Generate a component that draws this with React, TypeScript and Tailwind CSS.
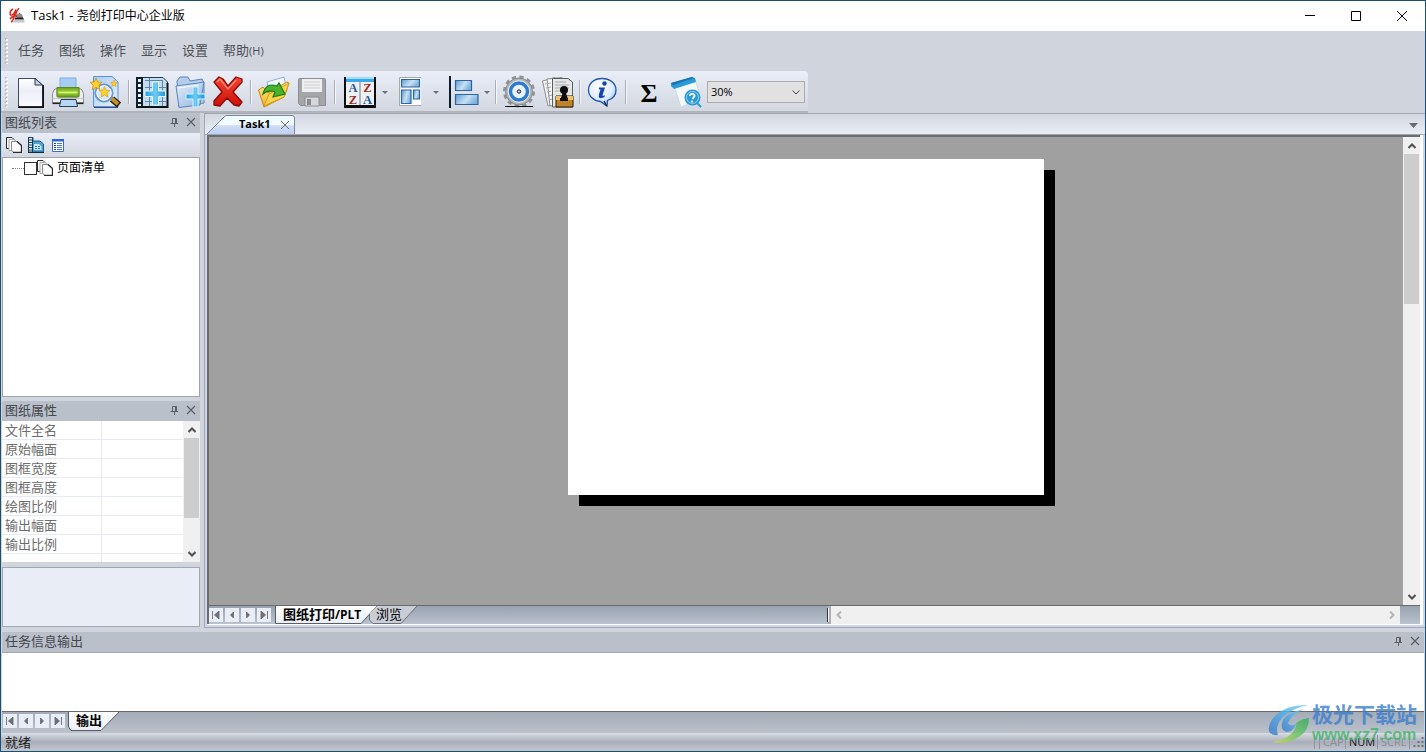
import React from "react";

type Kids = { children?: React.ReactNode };

function Defs() {
  return (
    <svg className="absolute size-0" aria-hidden="true">
      <defs>
        <linearGradient id="paper" x1="0" y1="0" x2="0" y2="1">
          <stop offset="0" stopColor="#ffffff" />
          <stop offset="0.45" stopColor="#eceef8" />
          <stop offset="1" stopColor="#fbfbff" />
        </linearGradient>
        <linearGradient id="sky" x1="0" y1="0" x2="1" y2="1">
          <stop offset="0" stopColor="#a9cdf2" />
          <stop offset="1" stopColor="#e6f2fd" />
        </linearGradient>
        <linearGradient id="steel" x1="0" y1="0" x2="1" y2="0.4">
          <stop offset="0" stopColor="#5c9bd0" />
          <stop offset="0.6" stopColor="#c7e0f3" />
          <stop offset="1" stopColor="#7db4de" />
        </linearGradient>
        <linearGradient id="green" x1="0" y1="0" x2="0" y2="1">
          <stop offset="0" stopColor="#6b9c1f" />
          <stop offset="0.5" stopColor="#a8d836" />
          <stop offset="1" stopColor="#5c9a1c" />
        </linearGradient>
        <linearGradient id="plus" x1="0" y1="0" x2="1" y2="0">
          <stop offset="0" stopColor="#1f9fe4" />
          <stop offset="0.5" stopColor="#6dcbf6" />
          <stop offset="1" stopColor="#1a93dc" />
        </linearGradient>
        <linearGradient id="folder" x1="0" y1="0" x2="1" y2="1">
          <stop offset="0" stopColor="#e3eefa" />
          <stop offset="1" stopColor="#8fb4e0" />
        </linearGradient>
        <linearGradient id="red" x1="0" y1="0" x2="0" y2="1">
          <stop offset="0" stopColor="#f4452f" />
          <stop offset="1" stopColor="#c8120c" />
        </linearGradient>
        <linearGradient id="gold" x1="0" y1="0" x2="0" y2="1">
          <stop offset="0" stopColor="#fff0a0" />
          <stop offset="1" stopColor="#f3ae1c" />
        </linearGradient>
        <radialGradient id="bubble" cx="0.4" cy="0.3" r="0.8">
          <stop offset="0" stopColor="#ffffff" />
          <stop offset="0.6" stopColor="#dcecff" />
          <stop offset="1" stopColor="#7fb2f2" />
        </radialGradient>
        <linearGradient id="tab" x1="0" y1="0" x2="0" y2="1">
          <stop offset="0" stopColor="#ecfbff" />
          <stop offset="0.5" stopColor="#f3fcff" />
          <stop offset="0.55" stopColor="#cfdcf8" />
          <stop offset="1" stopColor="#bfd0f3" />
        </linearGradient>
        <linearGradient id="sheet" x1="0" y1="0" x2="0" y2="1">
          <stop offset="0" stopColor="#ffffff" />
          <stop offset="1" stopColor="#e9edf3" />
        </linearGradient>
        <linearGradient id="swirl" x1="0" y1="1" x2="1" y2="0">
          <stop offset="0" stopColor="#3a78c8" />
          <stop offset="0.6" stopColor="#4fb4ee" />
          <stop offset="1" stopColor="#7fcdf2" />
        </linearGradient>
        <linearGradient id="leaf" x1="0" y1="1" x2="1" y2="0">
          <stop offset="0" stopColor="#d2dd45" />
          <stop offset="0.5" stopColor="#6cc45f" />
          <stop offset="1" stopColor="#2fa95e" />
        </linearGradient>
      </defs>
    </svg>
  );
}

function Art({ children }: Kids) {
  return (
    <svg viewBox="0 0 38 38" className="size-[38px]" aria-hidden="true">
      {children}
    </svg>
  );
}

const NewIcon = () => (
  <Art>
    <path d="M7.5 5.5H24L31.5 12V33.5H7.5Z" fill="url(#paper)" stroke="#3b4a66" />
    <path d="M7 34.2H32.2V12" fill="none" stroke="#111" strokeWidth="1.6" />
    <path d="M24 5.5V12H31.5Z" fill="#c5d4ee" stroke="#24324c" />
  </Art>
);
const PrintIcon = () => (
  <Art>
    <path d="M11 5H27V17H11Z" fill="#a6cdf3" stroke="#7fb0e4" />
    <path d="M3.5 21Q4 16 8 15V24H30V15Q34 16 34.5 21V30H3.5Z" fill="#eceef0" stroke="#8d9296" />
    <path d="M8 14.5H30V22Q30 24 28 24H10Q8 24 8 22Z" fill="url(#green)" stroke="#5a8b1a" />
    <path d="M10 19.5H28" stroke="#d8f27a" strokeWidth="1.6" />
    <path d="M3.5 25.5H34.5" stroke="#c3c7ca" />
    <path d="M3.5 30.3H34.5" stroke="#222" strokeWidth="1.6" />
    <path d="M12 26.5H27L28.5 33.5H10.5Z" fill="#b7d7f7" stroke="#2d3d55" />
  </Art>
);
const STAR = "M0 -6L1.7 -2 6 -1.7 2.8 1.2 3.8 5.6 0 3.2 -3.8 5.6 -2.8 1.2 -6 -1.7 -1.7 -2Z";
const PreviewIcon = () => (
  <Art>
    <path d="M6.5 3.5H25L31 9V34H6.5Z" fill="url(#sky)" stroke="#5d93d8" />
    <path d="M7 34.3H31" stroke="#274f93" strokeWidth="1.4" />
    <path d="M25 26L32 32" stroke="#2a210f" strokeWidth="6.5" />
    <path d="M23.5 24.5L31 31" stroke="#c4922b" strokeWidth="4" />
    <circle cx="17" cy="20" r="8.5" fill="#cfe7ff" stroke="#6d95c8" strokeWidth="2" />
    <circle cx="17" cy="20" r="7.2" fill="none" stroke="#fff" />
    <path d={STAR} transform="translate(9 11)" fill="#ffd428" stroke="#d88e0c" strokeWidth="0.8" />
    <path d={STAR} transform="translate(17.5 19) scale(.9)" fill="#ffd428" stroke="#e39a14" strokeWidth="0.8" />
    <path d={STAR} transform="translate(27 10.5) scale(.55)" fill="#ffd428" stroke="#d88e0c" />
  </Art>
);
const FilmAddIcon = () => (
  <Art>
    <path d="M3.5 4.5H30L34.5 9V34H3.5Z" fill="#c3dcf0" stroke="#1f3850" />
    <path d="M3 4H10V34H3Z" fill="#12202e" />
    <path d="M5 6H8V9H5ZM5 11H8V14H5ZM5 16H8V19H5ZM5 21H8V24H5ZM5 26H8V29H5ZM5 31H8V33H5Z" fill="#e6f4ff" />
    <path d="M12 7.500H30M12 14.500H33M12 28.500H33M16.500 5V33M29.500 8V33" stroke="#5d86a6" />
    <path d="M3 34H34.500V10" fill="none" stroke="#0c1116" strokeWidth="2" />
    <path d="M19.500 9H25.500V18H32.500V23.500H25.500V32H19.500V23.500H12V18H19.500Z" fill="url(#plus)" stroke="#e2f7ff" />
  </Art>
);
const FolderAddIcon = () => (
  <Art>
    <path d="M6 8L9 4H17L19 8L31 6L33 10V30L8 34Z" fill="#b5cdea" stroke="#5b86ba" />
    <path d="M5 13L27 10 33 9 29 32 8 34.5Z" fill="url(#folder)" stroke="#5b86ba" />
    <path d="M7 15L28 12" stroke="#fff" />
    <path d="M22 14H27V21H34V26H27V34H22V26H15V21H22Z" fill="url(#plus)" stroke="#d9f3ff" />
  </Art>
);
const DeleteIcon = () => (
  <Art>
    <path d="M5 9L10 4 14 6 19 13 27 4 33 6 33 9 24 19 33 29 30 33 25 32 18 25 11 33 5 32 5 28 13 19Z" fill="url(#red)" stroke="#8d0905" strokeWidth="1.3" strokeLinejoin="round" />
    <path d="M8 9L11 6 19 16 27 7" fill="none" stroke="#ff8b76" strokeWidth="1.3" />
  </Art>
);
const OpenIcon = () => (
  <Art>
    <path d="M12 9L29 4 32 18 15 24Z" fill="#f2f8ff" stroke="#8fb0dc" />
    <path d="M3.5 17L8 14 13 20 32 9 34 10 29 24 9 34Z" fill="url(#gold)" stroke="#c88511" />
    <path d="M9 33L14 21 34 10 29 24Z" fill="#fbd34c" stroke="#d99a1a" />
    <path d="M8 21Q11 9 22 13L24 10 30 21 18 24 20 19Q14 16 8 21Z" fill="#49b32c" stroke="#227a13" strokeWidth="1.2" />
  </Art>
);
const SaveIcon = () => (
  <Art>
    <path d="M5.5 6.5Q5.5 5.5 6.5 5.5H31.5Q32.5 5.5 32.5 6.5V32.5H7.5L5.5 30.5Z" fill="#a5a6aa" stroke="#8d8e92" />
    <path d="M9 6H29V19H9Z" fill="#efeff0" />
    <path d="M11 9H27M11 12H27M11 15H27" stroke="#cfcfd2" />
    <path d="M12 24H26V33H12Z" fill="#d7d7da" stroke="#8d8e92" />
    <path d="M14 26H18V32H14Z" fill="#8b8c90" />
  </Art>
);
const SortIcon = () => (
  <Art>
    <path d="M3 4H35V35H3Z" fill="#0c0c0c" />
    <path d="M5 4H33V9H5Z" fill="#3ba8ea" />
    <path d="M5 4H33V6H5Z" fill="#9ee0fb" />
    <path d="M5 9H33V32H5Z" fill="#eef1f4" />
    <path d="M19 9V32" stroke="#777b80" />
    <g fontFamily="Liberation Serif, serif" fontWeight="700" fontSize="12.5" textAnchor="middle">
      <text x="12" y="19" fill="#265a9c">A</text>
      <text x="26.5" y="19" fill="#a02a22">Z</text>
      <text x="12" y="31" fill="#a02a22">Z</text>
      <text x="26.5" y="31" fill="#265a9c">A</text>
    </g>
  </Art>
);
const LayoutIcon = () => (
  <Art>
    <path d="M7 4H29V32H7Z" fill="#fbfcfd" />
    <path d="M7.5 32V4.5H29" fill="none" stroke="#a6a8aa" />
    <path d="M7 32.5H29" stroke="#a6a8aa" />
    <g fill="url(#steel)" stroke="#2f659f" strokeWidth="1.2">
      <path d="M9.5 6.5H27.5V14H9.5Z" />
      <path d="M9.5 17H19V30.5H9.5Z" />
      <path d="M21.5 17H27.5V26H21.5Z" />
    </g>
  </Art>
);
const AlignIcon = () => (
  <Art>
    <path d="M6 3H8V35H6Z" fill="#0c1a2c" />
    <g fill="url(#steel)" stroke="#2f659f" strokeWidth="1.2">
      <path d="M12.5 7.5H28.5V17.5H12.5Z" />
      <path d="M12.5 21.5H35V31.5H12.5Z" />
    </g>
  </Art>
);
const GearIcon = () => (
  <Art>
    <circle cx="19" cy="18.5" r="14.5" fill="none" stroke="#8f9296" strokeWidth="3" strokeDasharray="4.2 3.39" />
    <circle cx="19" cy="18.5" r="13.5" fill="#b3b6b9" stroke="#85888c" />
    <circle cx="19" cy="18.5" r="8.5" fill="#eaf3fb" stroke="#2b7bd0" strokeWidth="3.4" />
    <circle cx="19" cy="18.5" r="10.8" fill="none" stroke="#e8eaec" />
    <circle cx="19" cy="18.5" r="1.7" fill="#c9cdd1" stroke="#20262c" />
    <path d="M5 33.5H33" stroke="#0c0c0c" />
  </Art>
);
const DocsIcon = () => (
  <Art>
    <path d="M4.5 8L17 4.5 20 30 10 33Z" fill="#f1f2f2" stroke="#8b8e91" />
    <path d="M9 6L24 4.5V31L12 33Z" fill="#f7f7f7" stroke="#8b8e91" />
    <path d="M14.500 5.500H30L34.500 9V34H14.500Z" fill="#e5e6e6" stroke="#5b5e61" />
    <path d="M17 9H28M17 12H31M17 15H31M17 18H25M7 11L13 10M8 15L13 14M9 19L13 18M10 23L14 22M11 27L14 26" stroke="#a5a8aa" />
    <path d="M18 23H35V34H18Z" fill="#c08327" stroke="#2a1a08" />
    <path d="M18 23H35V27H18Z" fill="#eec26a" />
    <circle cx="26" cy="17" r="4" fill="#0d0d0d" />
    <path d="M25 19H27.500L30 26H22.500ZM22 25H30V28H22Z" fill="#0d0d0d" />
  </Art>
);
const InfoIcon = () => (
  <Art>
    <path d="M18 5.500C26 5.500 32 10.500 32 17C32 22.500 28.500 26 23.500 27.500L23 33 16.500 28.500C9.500 28 4.500 23 4.500 17C4.500 10.500 10 5.500 18 5.500Z" fill="url(#bubble)" stroke="#2453a8" strokeWidth="1.3" />
    <path d="M20 28L22.800 33" stroke="#111c38" strokeWidth="1.300" />
    <circle cx="20.500" cy="10.500" r="2.200" fill="#1745b0" />
    <path d="M15 14.500H21L18.500 22.500Q18.500 23.500 21 22L20.500 24Q17 26 15 24.500Q14 23.500 16.500 16.500L14.800 16.200Z" fill="#1745b0" />
  </Art>
);
const SearchPageIcon = () => (
  <Art>
    <path d="M6 13L27 6 33 26 13 34Z" fill="#f4f8fb" stroke="#d0dae3" />
    <path d="M3 10L24 4 27 5 28 9 6 16 3 13Z" fill="#2a9bd8" />
    <path d="M3 10L24 4 26 5 5 12Z" fill="#1873ad" />
    <circle cx="24.500" cy="24.500" r="8" fill="#2a9bd8" />
    <circle cx="24.500" cy="24.500" r="6" fill="none" stroke="#8fd0f0" />
    <path d="M22 23Q22 20.500 25 21Q28 22.500 25.500 24.500L24.500 26" fill="none" stroke="#fff" strokeWidth="1.800" />
    <circle cx="24" cy="28.500" r="1.100" fill="#fff" />
    <path d="M29 30L33 34" stroke="#2a9bd8" strokeWidth="2" />
  </Art>
);

function Tool({ label, children }: Kids & { label: string }) {
  return (
    <button type="button" aria-label={label} className="flex size-[38px] shrink-0 items-center justify-center">
      {children}
    </button>
  );
}
function SplitTool({ label, children }: Kids & { label: string }) {
  return (
    <div className="ml-0.5 flex shrink-0 items-center">
      <Tool label={label}>{children}</Tool>
      <button type="button" aria-label={label + "选项"} className="flex h-[38px] w-[11px] items-center justify-center">
        <svg viewBox="0 0 6 3" className="h-[3px] w-1.5"><path d="M0 0H6L3 3Z" fill="#6f6f73" /></svg>
      </button>
    </div>
  );
}
const Sep = () => (
  <div className="flex w-2 shrink-0 justify-center">
    <div className="h-6 w-0.5 border-l border-[#a9aeb8] bg-[#f6f8fc]" />
  </div>
);
const Grip = ({ className }: { className: string }) => (
  <svg className={className} aria-hidden="true">
    <path d="M1 0V40" stroke="#b4b8c1" strokeWidth="2" strokeDasharray="2 2" />
    <path d="M2 1V40" stroke="#fff" strokeWidth="2" strokeDasharray="2 2" />
  </svg>
);

function PinClose() {
  return (
    <div className="flex items-center gap-[7px] text-[#5c6066]">
      <button type="button" aria-label="固定" className="flex size-2.5 items-center justify-center">
        <svg viewBox="0 0 10 10" className="size-2.5" fill="none" stroke="currentColor">
          <path d="M3.500 6.500V1.500H7.500V6.500M6.500 1.500V6.500M1.500 6.500H9M5.500 6.500V10" />
        </svg>
      </button>
      <button type="button" aria-label="关闭" className="flex size-2.5 items-center justify-center">
        <svg viewBox="0 0 10 10" className="size-2.5" fill="none" stroke="currentColor" strokeWidth="1.200">
          <path d="M1 1L9 9M9 1L1 9" />
        </svg>
      </button>
    </div>
  );
}
function PanelHead({ title }: { title: string }) {
  return (
    <header className="flex h-5 shrink-0 items-center justify-between bg-[#bac0ca] pr-1 pb-0.5 pl-[3px] text-[13px] leading-[18px] text-[#44474c]">
      <h2>{title}</h2>
      <PinClose />
    </header>
  );
}

const NAV: [string, string][] = [
  ["首页", "M3.500 3V11M10 3V11L5.500 7Z"],
  ["上一页", "M8.500 4V10L5.500 7Z"],
  ["下一页", "M5.500 4V10L8.500 7Z"],
  ["末页", "M4 3V11L8.500 7ZM10.500 3V11"],
];
function SheetNav() {
  return (
    <div className="flex shrink-0 gap-0.5">
      {NAV.map(([label, d]) => (
        <button key={label} type="button" aria-label={label} className="size-3.5 bg-[#e9edf6]">
          <svg viewBox="0 0 14 14" className="size-3.5">
            <path d={d} fill="#6c6f75" stroke="#6c6f75" strokeWidth="0.900" />
          </svg>
        </button>
      ))}
    </div>
  );
}

const Chevron = ({ d, light }: { d: string; light?: boolean }) => (
  <svg viewBox="0 0 8 8" className="size-2" fill="none" stroke={light ? "#b5b5b5" : "#505050"} strokeWidth="2">
    <path d={d} />
  </svg>
);
const UP = "M0.500 6L4 2.500 7.500 6";
const DOWN = "M0.500 2L4 5.500 7.500 2";

function VScroll({ thumb }: { thumb: string }) {
  return (
    <div className="flex w-[17px] shrink-0 flex-col bg-[#f0f0f0]">
      <button type="button" aria-label="向上滚动" className="flex h-[17px] shrink-0 items-center justify-center"><Chevron d={UP} /></button>
      <div className="flex min-h-0 flex-1 flex-col px-px"><div className={thumb} /></div>
      <button type="button" aria-label="向下滚动" className="flex h-[17px] shrink-0 items-center justify-center"><Chevron d={DOWN} /></button>
    </div>
  );
}

const PagesIcon = () => (
  <svg viewBox="0 0 16 16" className="size-4" fill="#fdfdfd" stroke="#2b2b2b">
    <path d="M0.500 0.500H6L8.500 3V11.500H0.500Z" />
    <path d="M3 2.500H8L11.500 5V13.500H3Z" stroke="#a8a8a8" />
    <path d="M5.500 4.500H11L15.500 8.500V15.500H7.500L5.500 13Z" stroke="#8a8a8a" />
    <path d="M11 4.500L15.500 8.500V15.500H7" fill="none" strokeWidth="1.300" />
  </svg>
);
const SheetIcon = () => (
  <svg viewBox="0 0 16 16" className="size-4">
    <path d="M0.500 0.500H5V4H12L15.500 7V15H0.500Z" fill="#4aa3d4" stroke="#1d5c86" />
    <path d="M0.500 0.500H4.500V15H0.500Z" fill="#e6f1f8" stroke="#1a3a52" />
    <path d="M1 3H4M1 5.500H4M1 8H4M1 10.500H4M1 13H4" stroke="#1a3a52" />
    <path d="M6 7H11L13.500 9.500V13H6Z" fill="#c8e6f6" />
    <path d="M7 9.500H12M7 11.500H12" stroke="#2478ab" strokeDasharray="2 1" />
    <path d="M0 15.500H16" stroke="#102c40" />
  </svg>
);
const ListIcon = () => (
  <svg viewBox="0 0 12 13" className="h-[13px] w-3">
    <path d="M0.500 0.500H11.500V12.500H0.500Z" fill="#fff" stroke="#3a6bd0" />
    <path d="M0 0H12V2.500H0Z" fill="#2f66d4" />
    <path d="M5 4.500H10M5 6.500H10M5 8.500H10M5 10.500H10" stroke="#4b7bd8" />
    <path d="M2 4.500H4M2 6.500H4M2 8.500H4M2 10.500H4" stroke="#1b3f94" />
  </svg>
);

const MENUS = ["任务", "图纸", "操作", "显示", "设置"];
const PROPS = ["文件全名", "原始幅面", "图框宽度", "图框高度", "绘图比例", "输出幅面", "输出比例"];

function TitleBar() {
  return (
    <header className="flex h-[30px] shrink-0 items-center bg-white pl-2 text-xs text-black">
      <svg viewBox="0 0 16 16" className="size-4">
        <path d="M4 1Q0 3 1.500 7Q4 8 7 1.500Q5 6 5 9Q4 13 2 14M10 0Q6 5 7 8Q9 9 11 5M1 11Q4 7 9 8" fill="none" stroke="#e0241c" strokeWidth="1.400" />
        <path d="M8 6L13 6 14 10H8Z" fill="#8d8d8d" />
        <path d="M6 9.500H14L15 11.500H5.500Z" fill="#222" />
        <path d="M4 12H15.500V14.500H4Z" fill="#c4c7cb" />
      </svg>
      <h1 className="ml-1.5 flex flex-1 items-center whitespace-pre">
        <span className="text-[13px]">{"Task1 - "}</span>尧创打印中心企业版
      </h1>
      <div className="flex">
        <button type="button" aria-label="最小化" className="flex w-[46px] justify-center">
          <svg viewBox="0 0 10 10" className="size-2.5" stroke="#000"><path d="M0 4.500H10" /></svg>
        </button>
        <button type="button" aria-label="最大化" className="flex w-[46px] justify-center">
          <svg viewBox="0 0 10 10" className="size-2.5" fill="none" stroke="#000"><path d="M0.500 0.500H9.500V9.500H0.500Z" /></svg>
        </button>
        <button type="button" aria-label="关闭窗口" className="flex w-[46px] justify-center">
          <svg viewBox="0 0 10 10" className="size-2.5" stroke="#000"><path d="M0 0L10 10M10 0L0 10" /></svg>
        </button>
      </div>
    </header>
  );
}

function ToolBar() {
  return (
    <div className="flex h-[42px] shrink-0">
      <div className="flex items-center rounded-tr border-b-2 border-[#b0b4bd] bg-linear-to-b from-[#eaeef8] to-[#d3d7e0] pt-0.5 pr-[3px] pl-1">
        <Grip className="mr-0.5 h-[30px] w-1" />
        <Tool label="新建"><NewIcon /></Tool>
        <Tool label="打印"><PrintIcon /></Tool>
        <Tool label="预览"><PreviewIcon /></Tool>
        <Sep />
        <Tool label="添加图纸"><FilmAddIcon /></Tool>
        <Tool label="添加文件夹"><FolderAddIcon /></Tool>
        <Tool label="删除"><DeleteIcon /></Tool>
        <Sep />
        <Tool label="打开"><OpenIcon /></Tool>
        <Tool label="保存"><SaveIcon /></Tool>
        <Sep />
        <SplitTool label="排序"><SortIcon /></SplitTool>
        <SplitTool label="排版"><LayoutIcon /></SplitTool>
        <SplitTool label="对齐"><AlignIcon /></SplitTool>
        <Sep />
        <Tool label="设置"><GearIcon /></Tool>
        <Tool label="图章"><DocsIcon /></Tool>
        <Sep />
        <Tool label="信息"><InfoIcon /></Tool>
        <Sep />
        <Tool label="统计"><span className="pt-1 font-['Liberation_Serif',serif] text-[26px] leading-none font-bold text-black">Σ</span></Tool>
        <Tool label="查询"><SearchPageIcon /></Tool>
        <div className="relative ml-px">
          <select aria-label="缩放" defaultValue="30%" className="block h-[22px] w-[98px] appearance-none border border-[#adadad] bg-[#e1e1e1] pl-[3px] text-[11px] text-black">
            <option>30%</option>
          </select>
          <svg viewBox="0 0 8 5" className="pointer-events-none absolute top-[9px] right-[5px] h-[5px] w-2" fill="none" stroke="#444">
            <path d="M0.500 0.500L4 4 7.500 0.500" />
          </svg>
        </div>
      </div>
    </div>
  );
}

function Sidebar() {
  return (
    <aside className="flex w-[198px] shrink-0 flex-col pb-px">
      <PanelHead title="图纸列表" />
      <div className="flex h-6 shrink-0 items-center gap-1.5 bg-linear-to-b from-[#e9edf7] to-[#d3d7e0] pl-1">
        <button type="button" aria-label="页面"><PagesIcon /></button>
        <button type="button" aria-label="图纸"><SheetIcon /></button>
        <button type="button" aria-label="列表" className="ml-0.5"><ListIcon /></button>
      </div>
      <div className="min-h-0 flex-1 border border-[#9fa3ab] bg-white pl-[9px]">
        <label className="flex h-5 items-center text-xs text-black">
          <span className="w-3 border-t border-dotted border-[#808080]" />
          <input type="checkbox" className="size-[13px] appearance-none border border-[#333] bg-white" />
          <PagesIcon />
          <span className="ml-1">页面清单</span>
        </label>
      </div>
      <div className="mt-1 flex h-[161px] shrink-0 flex-col">
        <PanelHead title="图纸属性" />
        <div className="flex h-[141px] overflow-hidden bg-white">
          <table className="h-fit flex-1 table-fixed border-separate border-spacing-0 text-[13px] leading-[18px] text-[#6d6d6d]">
            <tbody>
              {PROPS.map((name) => (
                <tr key={name}>
                  <th scope="row" className="w-[100px] border-r border-b border-[#e6eaf4] p-0 pl-[3px] text-left font-normal">{name}</th>
                  <td className="border-b border-[#e6eaf4] p-0" />
                </tr>
              ))}
              <tr className="h-[18px]"><th className="border-r border-[#e6eaf4] p-0" /><td className="p-0" /></tr>
            </tbody>
          </table>
          <VScroll thumb="h-20 bg-[#cdcdcd]" />
        </div>
      </div>
      <div className="mt-[5px] h-[60px] shrink-0 border border-[#a3a7b0] bg-[#e9edf6]" />
    </aside>
  );
}

function Workspace() {
  return (
    <main className="ml-1 flex min-w-0 flex-1 flex-col border-b border-l border-[#a2a7b2]">
      <div className="flex h-[22px] shrink-0 items-end justify-between border-t border-b border-[#a2a7b2] bg-linear-to-b from-[#d3d7e0] to-[#e9edf6] pr-[7px] pl-0.5">
        <button type="button" className="relative flex h-[19px] w-[88px] items-center text-[11px] font-bold text-black">
          <svg viewBox="0 0 88 19" className="absolute inset-0 h-[19px] w-[88px]">
            <path d="M0 19L17 2Q18.500 0.500 20 0.500H85Q87.500 0.500 87.500 3V19" fill="url(#tab)" stroke="#7d8794" />
          </svg>
          <span className="relative ml-8">Task1</span>
          <svg viewBox="0 0 8 8" className="relative ml-2.5 size-2" stroke="#6b6b6b"><path d="M0 0L8 8M8 0L0 8" /></svg>
        </button>
        <button type="button" aria-label="标签列表" className="mb-1.5">
          <svg viewBox="0 0 9 5" className="h-[5px] w-[9px]"><path d="M0 0H9L4.500 5Z" fill="#6a6a6a" /></svg>
        </button>
      </div>
      <div className="flex min-h-0 flex-1 flex-col border-x-2 border-b-2 border-[#cbd6ee] bg-white pr-[3px] pb-px">
        <div className="flex min-h-0 flex-1 flex-col border-t-2 border-l-2 border-[#6d6d6d]">
          <div className="flex min-h-0 flex-1">
            <div className="flex flex-1 justify-center bg-[#a0a0a0] pt-[22px]">
              <div className="h-[336px] w-[476px] bg-white shadow-[11px_11px_0_#000]" />
            </div>
            <VScroll thumb="h-[150px] bg-[#cdcdcd]" />
          </div>
          <div className="flex h-[19px] shrink-0 border-t border-[#696969] bg-linear-to-b from-[#98a3b0] to-[#b9c2cd]">
            <div className="flex w-[51%] items-center">
              <SheetNav />
              <button type="button" className="relative ml-1 flex h-[18px] w-[102px] items-center pl-2 text-[13px] font-bold text-black">
                <svg viewBox="0 0 102 18" className="absolute inset-0 h-[18px] w-[102px]">
                  <path d="M0.500 0V17.500H86L102 0Z" fill="url(#sheet)" />
                  <path d="M0.500 0V17.500H86L102 0" fill="none" stroke="#5a5f66" />
                </svg>
                <span className="relative whitespace-nowrap">图纸打印<span className="text-xs">/PLT</span></span>
              </button>
              <button type="button" className="relative -ml-2 flex h-[18px] w-12 items-center pl-[7px] text-[13px] text-black">
                <svg viewBox="0 0 48 18" className="absolute inset-0 h-[18px] w-12">
                  <path d="M8 0L0.500 8V14L4 17.500H32L48 0Z" fill="#c9ced6" />
                  <path d="M0.500 8V14L4 17.500H32L48 0" fill="none" stroke="#6b7078" />
                </svg>
                <span className="relative">浏览</span>
              </button>
            </div>
            <div className="flex w-1 items-center bg-[#a9afbc]"><div className="h-3.5 w-0.5 border-l border-[#333] bg-white" /></div>
            <div className="flex flex-1 items-center justify-between bg-[#f0f0f0] px-1">
              <button type="button" aria-label="向左滚动"><Chevron light d="M6 0.500L2.500 4 6 7.500" /></button>
              <button type="button" aria-label="向右滚动"><Chevron light d="M2 0.500L5.500 4 2 7.500" /></button>
            </div>
            <div className="w-5" />
          </div>
        </div>
      </div>
    </main>
  );
}

function OutputPanel() {
  return (
    <section className="mt-1 shrink-0 px-px">
      <PanelHead title="任务信息输出" />
      <div className="h-[59px] border-t border-[#a3a7b0] bg-white" />
      <div className="flex h-[22px] items-start border-t border-[#696969] bg-linear-to-b from-[#a3acb8] to-[#bbc2cc] pl-px">
        <div className="pt-0.5"><SheetNav /></div>
        <button type="button" className="relative ml-[3px] flex h-[19px] w-[52px] items-center pb-0.5 pl-2 text-[13px] font-bold text-black">
          <svg viewBox="0 0 52 19" className="absolute inset-0 h-[19px] w-[52px]">
            <path d="M0.500 0V15L3 18.500H33L51 0Z" fill="url(#sheet)" />
            <path d="M0.500 0V15L3 18.500H33L51 0" fill="none" stroke="#5a5f66" />
          </svg>
          <span className="relative">输出</span>
        </button>
      </div>
    </section>
  );
}

function StatusBar() {
  return (
    <footer className="flex h-[18px] shrink-0 items-center justify-between bg-linear-to-b from-[#d9dce3] via-[#a9aebb] to-[#c3c7cf] pl-1 text-[13px] leading-[18px] text-[#1c1c1c]">
      <span>就绪</span>
      <div className="flex h-full items-center text-[11px] text-[#8b8f97]">
        <span className="mr-1 h-3.5 border-l border-[#8e939d]" />
        <span className="flex h-3.5 w-[26px] items-center border-l border-[#8e939d] pl-[3px]">CAP</span>
        <span className="flex h-3.5 w-8 items-center border-l border-[#8e939d] pl-[3px] text-[#111]">NUM</span>
        <span className="flex h-3.5 w-8 items-center border-l border-[#8e939d] pl-[3px]">SCRL</span>
        <svg viewBox="0 0 14 14" className="h-3.5 w-4 border-l border-[#8e939d]" fill="#6e737c">
          <path d="M11 2H13V4H11ZM11 6H13V8H11ZM11 10H13V12H11ZM7 6H9V8H7ZM7 10H9V12H7ZM3 10H5V12H3Z" />
        </svg>
      </div>
    </footer>
  );
}

function Watermark() {
  return (
    <div className="pointer-events-none absolute right-2 bottom-1.5 flex items-center gap-0.5 opacity-80">
      <svg viewBox="0 0 42 40" className="h-10 w-[42px]">
        <path d="M40 1Q20 0 8 11Q-1 20 1 27Q3 32 10 31Q7 22 14 14Q22 5 40 1Z" fill="url(#swirl)" />
        <path d="M36 5Q20 8 15 16Q11 26 19 28Q26 27 28 20Q22 23 20 19Q23 11 36 5Z" fill="url(#swirl)" />
        <path d="M41 14Q41 26 32 32Q20 41 4 38Q17 36 23 30Q29 24 28 19Q33 15 41 14Z" fill="url(#leaf)" />
      </svg>
      <div className="flex flex-col">
        <span className="text-[21px] leading-[22px] font-bold text-[#3c7fce]">极光下载站</span>
        <span className="font-['Liberation_Sans',sans-serif] text-[16px] leading-5 font-bold text-[#45b56c]">www.xz7.com</span>
      </div>
    </div>
  );
}

export default function App() {
  return (
    <div className="relative flex h-screen min-h-[600px] flex-col overflow-hidden border border-[#1d4f70] bg-[#d0d4dd] font-['Open_Sans','Noto_Sans_CJK_SC',sans-serif]">
      <Defs />
      <TitleBar />
      <nav className="flex h-10 shrink-0 items-center gap-[15px] pb-px pl-1 text-[13px] text-[#4c4f55]">
        <Grip className="-mr-[6px] h-[26px] w-1" />
        {MENUS.map((m) => (
          <button key={m} type="button">{m}</button>
        ))}
        <button type="button">帮助<span className="text-[11px]">(H)</span></button>
      </nav>
      <ToolBar />
      <div className="flex min-h-0 flex-1 pl-px">
        <Sidebar />
        <Workspace />
      </div>
      <OutputPanel />
      <StatusBar />
      <Watermark />
    </div>
  );
}
